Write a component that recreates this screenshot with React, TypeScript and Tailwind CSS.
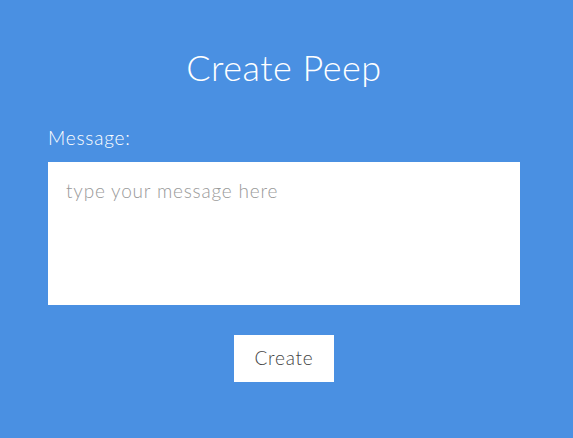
import { useState } from "react";

export default function App() {
  const [message, setMessage] = useState("");

  return (
    <div className="min-h-[438px] w-full bg-[#4a90e2] font-['Lato','Noto_Sans',sans-serif] text-white">
      <div className="flex flex-col pl-12 pr-[53px] pt-[44px]">
        <h1 className="text-center text-[36px] font-light leading-[46px] tracking-[0.5px]">
          Create Peep
        </h1>

        {/* form */}
        <label htmlFor="msg" className="mt-[35px] text-[19px] font-light leading-[26px] tracking-[0.8px]">
          Message:
        </label>
        <textarea
          id="msg"
          value={message}
          onChange={(e) => setMessage(e.target.value)}
          placeholder="type your message here"
          className="mt-[11px] h-[143px] w-full resize-none bg-white px-[18px] pt-[16px] pb-[14px] text-[19px] font-light leading-[26px] tracking-[0.8px] text-[#444] outline-none placeholder:text-[#999]"
        />

        <div className="mt-[30px] flex justify-center">
          <button className="h-[47px] w-[100px] bg-white text-[19px] font-light tracking-[0.8px] text-[#444]">
            Create
          </button>
        </div>
      </div>
    </div>
  );
}
